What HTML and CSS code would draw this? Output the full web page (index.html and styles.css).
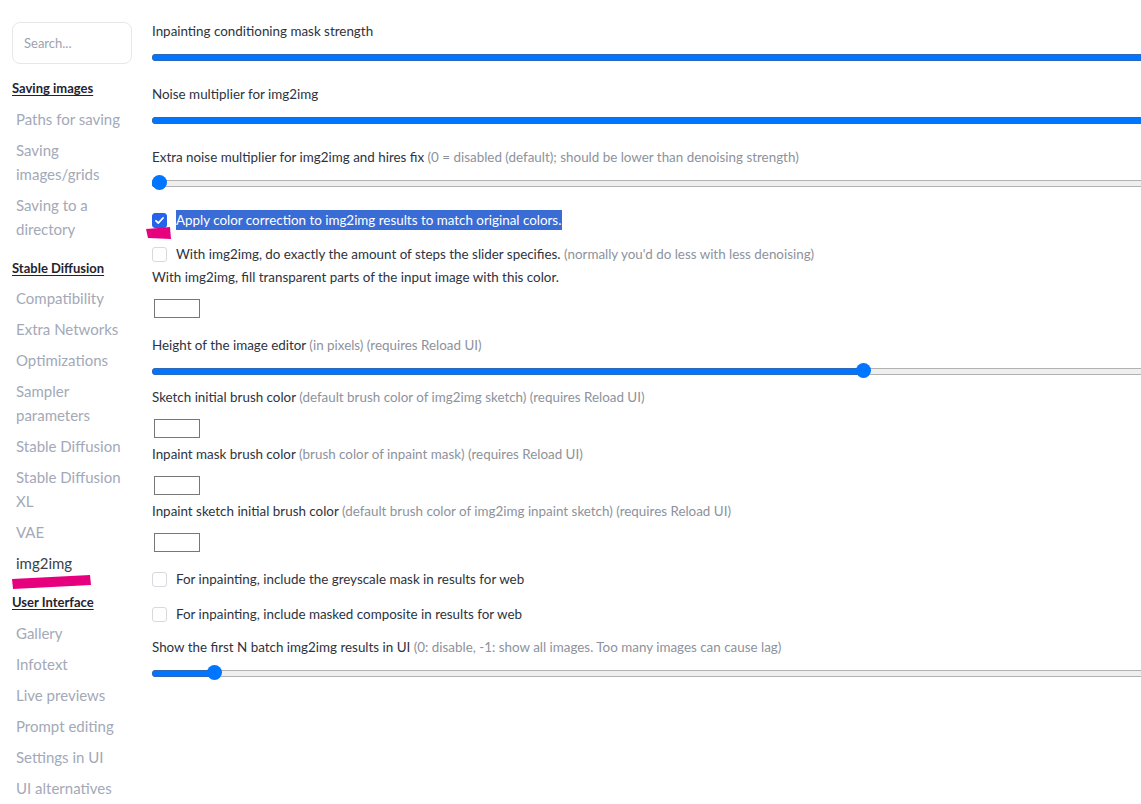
FILE: index.html
```html
<!DOCTYPE html>
<html lang="en">
<head>
    <meta charset="UTF-8">
    <title>settings - img2img</title>
    <link rel="stylesheet" href="styles.css">
</head>
<body>
<section id="page">
    <nav id="sidebar">
        <div class="search">Search...</div>

        <div class="navHead">Saving images</div>
        <div class="navItem">Paths for saving</div>
        <div class="navItem">Saving images/grids</div>
        <div class="navItem">Saving to a directory</div>

        <div class="navHead">Stable Diffusion</div>
        <div class="navItem">Compatibility</div>
        <div class="navItem">Extra Networks</div>
        <div class="navItem">Optimizations</div>
        <div class="navItem">Sampler parameters</div>
        <div class="navItem">Stable Diffusion</div>
        <div class="navItem">Stable Diffusion XL</div>
        <div class="navItem">VAE</div>
        <div class="navItem current">img2img
            <svg class="marker" width="84" height="16" viewBox="0 0 84 16">
                <polygon points="0,5 78,1 79,11 1,15" fill="#e6007e"/>
            </svg>
        </div>

        <div class="navHead">User Interface</div>
        <div class="navItem">Gallery</div>
        <div class="navItem">Infotext</div>
        <div class="navItem">Live previews</div>
        <div class="navItem">Prompt editing</div>
        <div class="navItem">Settings in UI</div>
        <div class="navItem">UI alternatives</div>
    </nav>

    <section id="settings">
        <div class="label">Inpainting conditioning mask strength</div>
        <div class="slider"><div class="fill" style="width: 100%"></div></div>

        <div class="label">Noise multiplier for img2img</div>
        <div class="slider"><div class="fill" style="width: 100%"></div></div>

        <div class="label">Extra noise multiplier for img2img and hires fix <span class="hint">(0 = disabled (default); should be lower than denoising strength)</span></div>
        <div class="slider"><div class="fill" style="width: 0"></div><div class="thumb" style="left: 0"></div></div>

        <div class="check first">
            <span class="box on">
                <svg width="11" height="11" viewBox="0 0 11 11"><path d="M2 5.8 L4.4 8 L9 3" fill="none" stroke="#fff" stroke-width="1.8" stroke-linecap="round" stroke-linejoin="round"/></svg>
            </span>
            <span class="selected">Apply color correction to img2img results to match original colors.</span>
            <svg class="marker boxMarker" width="26" height="13" viewBox="0 0 26 13">
                <polygon points="0,2 24,0 25,12 2,11" fill="#e6007e"/>
            </svg>
        </div>
        <div class="check tight">
            <span class="box"></span>
            <span>With img2img, do exactly the amount of steps the slider specifies. <span class="hint">(normally you'd do less with less denoising)</span></span>
        </div>

        <div class="label afterCheck">With img2img, fill transparent parts of the input image with this color.</div>
        <div class="swatch"></div>

        <div class="label afterSwatch">Height of the image editor <span class="hint">(in pixels) (requires Reload UI)</span></div>
        <div class="slider short"><div class="fill" style="width: 712px"></div><div class="thumb" style="left: 704px"></div></div>

        <div class="label">Sketch initial brush color <span class="hint">(default brush color of img2img sketch) (requires Reload UI)</span></div>
        <div class="swatch"></div>

        <div class="label nearSwatch">Inpaint mask brush color <span class="hint">(brush color of inpaint mask) (requires Reload UI)</span></div>
        <div class="swatch"></div>

        <div class="label nearSwatch">Inpaint sketch initial brush color <span class="hint">(default brush color of img2img inpaint sketch) (requires Reload UI)</span></div>
        <div class="swatch"></div>

        <div class="check afterSwatch">
            <span class="box"></span>
            <span>For inpainting, include the greyscale mask in results for web</span>
        </div>
        <div class="check">
            <span class="box"></span>
            <span>For inpainting, include masked composite in results for web</span>
        </div>

        <div class="label afterCheck2">Show the first N batch img2img results in UI <span class="hint">(0: disable, -1: show all images. Too many images can cause lag)</span></div>
        <div class="slider"><div class="fill" style="width: 63px"></div><div class="thumb" style="left: 55px"></div></div>
    </section>
</section>
</body>
</html>
```

FILE: styles.css
```css
body {
    margin: 0;
    background: #fff;
    font-family: "Lato", "Noto Sans", sans-serif;
    color: #2d3340;
    overflow: hidden;
}

#page {
    display: flex;
    height: 804px;
}

#sidebar {
    width: 128px;
    flex-shrink: 0;
    padding: 22px 0 0 12px;
}

.search {
    box-sizing: border-box;
    width: 120px;
    height: 42px;
    padding: 0 11px;
    border: 1px solid #e5e7eb;
    border-radius: 8px;
    font-size: 13px;
    line-height: 40px;
    color: #9ca3af;
}

.navHead {
    margin: 14px 0 4.5px;
    font-size: 13px;
    font-weight: 700;
    line-height: 20px;
    color: #1f2430;
    text-decoration: underline;
    text-underline-offset: 2px;
}

.navItem {
    position: relative;
    width: 118px;
    padding: 4px 0 3px 4px;
    font-size: 15px;
    line-height: 24px;
    color: #a3a9b8;
}

.navItem.current {
    color: #3a3f4c;
}

.marker {
    position: absolute;
}

.navItem .marker {
    left: 0;
    top: 27px;
}

#settings {
    flex: 1;
    display: flex;
    flex-direction: column;
    padding-top: 21px;
    padding-left: 12px;
    overflow: hidden;
    font-size: 13.4px;
    line-height: 20px;
}

.label {
    white-space: nowrap;
}

.hint {
    color: #8d929c;
}

/* flex column: margins add up, they don't collapse */
.slider {
    position: relative;
    height: 16px;
    margin: 8px -40px 19px 0;
}

.slider::before {
    content: "";
    position: absolute;
    left: 0;
    right: 0;
    top: 5px;
    height: 5px;
    background: #efefef;
    border: 1px solid #b2b2b2;
    border-radius: 3px;
}

.slider .fill {
    position: absolute;
    left: 0;
    top: 5px;
    height: 5px;
    background: #0075ff;
    border: 1px solid #2f68b8;
    border-radius: 3px 0 0 3px;
}

.slider .thumb {
    position: absolute;
    top: 0;
    width: 15px;
    height: 15px;
    border-radius: 50%;
    background: #0075ff;
}

.slider.short {
    margin-bottom: 8px;
}

.check {
    position: relative;
    display: flex;
    align-items: center;
    gap: 9px;
    height: 20px;
    margin-top: 15px;
    white-space: nowrap;
}

.check.first {
    margin-top: 0;
}

.check.tight {
    margin-top: 14px;
}

.box {
    box-sizing: border-box;
    width: 15px;
    height: 15px;
    flex-shrink: 0;
    border: 1px solid #d6d9de;
    border-radius: 3px;
    background: #fff;
    display: flex;
    align-items: center;
    justify-content: center;
}

.box.on {
    background: #2563eb;
    border-color: #2563eb;
}

.selected {
    background: #3a6cd6;
    color: #fff;
    padding-right: 1px;
}

.boxMarker {
    left: -6px;
    top: 17px;
}

.afterCheck {
    margin-top: 3px;
}

.swatch {
    width: 44px;
    height: 17px;
    margin: 12px 0 0 2px;
    border: 1px solid #777;
}

.afterSwatch {
    margin-top: 17px;
}

.nearSwatch {
    margin-top: 6px;
}

.afterCheck2 {
    margin-top: 13px;
}
```
